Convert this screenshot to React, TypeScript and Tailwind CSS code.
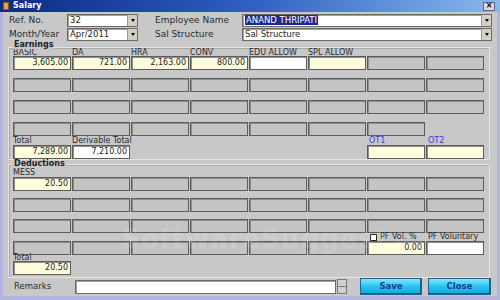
import React from "react";

type K = "y" | "w" | "g" | "n";
type C = { k: K; v?: string };

const F = { fontFamily: '"DejaVu Sans", Verdana, sans-serif' };

function Cell({ c }: { c: C }) {
  if (c.k === "n") return <div className="h-[14px]" />;
  const bg = c.k === "y" ? "bg-[#fdfdde]" : c.k === "w" ? "bg-white" : "bg-[#c4c4c4]";
  return (
    <div
      className={`h-[14px] ${bg} border border-[#5c5c5c] shadow-[inset_1px_1px_0_#8e8e8e] flex items-center justify-end pr-[2px] text-[8px] text-[#222] leading-none`}
    >
      {c.v}
    </div>
  );
}

function Row({ cells, className = "" }: { cells: C[]; className?: string }) {
  return (
    <div className={`grid grid-cols-[repeat(8,58px)] gap-x-px ${className}`}>
      {cells.map((c, i) => (
        <Cell key={i} c={c} />
      ))}
    </div>
  );
}

const g8: C[] = Array.from({ length: 8 }, () => ({ k: "g" as K }));

function Combo({ w, text, hl }: { w: string; text: string; hl?: boolean }) {
  return (
    <div className={`${w} h-[13px] bg-white border border-[#6a6a6a] shadow-[inset_1px_1px_0_#a0a0a0] flex items-center pl-[2px]`}>
      <div className="flex-1 text-[8.5px] leading-none text-[#222] whitespace-nowrap">
        {hl ? <span className="bg-[#1c2a8c] text-white px-px">{text}</span> : text}
      </div>
      <div className="w-[10px] h-[11px] bg-[#d4d0c8] border-l border-[#9a9a9a] flex items-center justify-center">
        <div className="w-0 h-0 border-l-[2.5px] border-r-[2.5px] border-t-[3px] border-l-transparent border-r-transparent border-t-black" />
      </div>
    </div>
  );
}

function LabelRow({ labels, className = "" }: { labels: React.ReactNode[]; className?: string }) {
  return (
    <div className={`grid grid-cols-[repeat(8,58px)] gap-x-px text-[8px] whitespace-nowrap ${className}`}>
      {labels.map((t, i) => (
        <div key={i}>{t}</div>
      ))}
    </div>
  );
}

export default function App() {
  return (
    <div className="w-[500px] h-[300px] bg-[#b4b4e0] flex flex-col overflow-hidden text-[#2a2a2a]" style={F}>
      {/* title bar */}
      <div className="h-[12px] shrink-0 bg-gradient-to-r from-[#0d2a86] via-[#2f5fc0] to-[#8ab8ee] flex items-center px-[3px]">
        <div className="w-[6px] h-[8px] bg-[#e9a23a] border border-[#8a5a10]" />
        <div className="ml-[4px] text-[8px] font-bold text-white leading-none">Salary</div>
        <div className="flex-1" />
        <div className="w-[12px] h-[9px] bg-[#d8d8e0] border border-[#606080] flex items-center justify-center text-[8px] font-bold leading-none text-black mr-[2px]">
          ×
        </div>
      </div>

      <div className="h-[284px] shrink-0 mx-[3px] bg-[#c8c8c8] relative flex flex-col">
        {/* header rows */}
        <div className="pt-[2px] pl-[6px] flex flex-col gap-px">
          <div className="flex items-center">
            <div className="w-[58px] text-[9px] leading-none">Ref. No.</div>
            <Combo w="w-[71px]" text="32" />
            <div className="ml-[17px] w-[87px] text-[9px] leading-none">Employee Name</div>
            <Combo w="w-[250px]" text="ANAND THRIPATI" hl />
          </div>
          <div className="flex items-center">
            <div className="w-[58px] text-[9px] leading-none">Month/Year</div>
            <Combo w="w-[71px]" text="Apr/2011" />
            <div className="ml-[17px] w-[87px] text-[9px] leading-none">Sal Structure</div>
            <Combo w="w-[250px]" text="Sal Structure" />
          </div>
        </div>

        {/* Earnings */}
        <div className="relative mt-[6px] ml-[5px] w-[482px] h-[113px] border border-[#e4e4e4] shadow-[inset_1px_1px_0_#a8a8a8] pl-[4px]">
          <div className="absolute -top-[7px] left-[4px] px-px h-[8px] bg-[#c8c8c8] text-[8px] font-bold leading-[8px] text-[#222]">
            Earnings
          </div>
          <LabelRow className="mt-[1px] h-[7px] leading-[8px]" labels={["BASIC", "DA", "HRA", "CONV", "EDU ALLOW", "SPL ALLOW", "", ""]} />
          <Row
            cells={[
              { k: "y", v: "3,605.00" },
              { k: "y", v: "721.00" },
              { k: "y", v: "2,163.00" },
              { k: "y", v: "800.00" },
              { k: "w" },
              { k: "y" },
              { k: "g" },
              { k: "g" },
            ]}
          />
          <Row className="mt-[8px]" cells={g8} />
          <Row className="mt-[8px]" cells={g8} />
          <Row className="mt-[8px]" cells={[...g8.slice(0, 7), { k: "n" }]} />
          <LabelRow
            className="h-[9px] leading-[10px]"
            labels={[
              "Total",
              "Derivable Total",
              "",
              "",
              "",
              "",
              <span className="text-[#3a3ad6] pl-[2px]">OT1</span>,
              <span className="text-[#3a3ad6] pl-[2px]">OT2</span>,
            ]}
          />
          <Row
            cells={[
              { k: "y", v: "7,289.00" },
              { k: "w", v: "7,210.00" },
              { k: "n" },
              { k: "n" },
              { k: "n" },
              { k: "n" },
              { k: "y" },
              { k: "y" },
            ]}
          />
        </div>

        {/* Deductions */}
        <div className="relative mt-[4px] ml-[5px] w-[482px] h-[114px] border border-[#e4e4e4] shadow-[inset_1px_1px_0_#a8a8a8] pl-[4px]">
          <div className="absolute -top-[5px] left-[4px] px-px h-[8px] bg-[#c8c8c8] text-[8px] font-bold leading-[8px] text-[#222]">
            Deductions
          </div>
          <div className="h-[12px] flex items-end text-[8px] leading-[8px]">MESS</div>
          <Row cells={[{ k: "y", v: "20.50" }, ...g8.slice(0, 7)]} />
          <Row className="mt-[7px]" cells={g8} />
          <Row className="mt-[7px]" cells={g8} />
          <LabelRow
            className="h-[8px] leading-[8px]"
            labels={[
              "",
              "",
              "",
              "",
              "",
              "",
              <div className="flex items-center pl-[3px] gap-[3px] h-[8px]">
                <div className="w-[7px] h-[7px] bg-white border border-[#222]" />
                <span>PF Vol. %</span>
              </div>,
              <span className="pl-[2px]">PF Voluntary</span>,
            ]}
          />
          <Row cells={[...g8.slice(0, 6), { k: "y", v: "0.00" }, { k: "w" }]} />
          <div className="h-[6px] text-[8px] leading-[6px]">Total</div>
          <Row cells={[{ k: "y", v: "20.50" }, { k: "n" }, { k: "n" }, { k: "n" }, { k: "n" }, { k: "n" }, { k: "n" }, { k: "n" }]} />
        </div>

        {/* Remarks row */}
        <div className="flex items-center h-[17px] pl-[11px]">
          <div className="w-[61px] text-[8.5px] leading-none">Remarks</div>
          <div className="w-[261px] h-[14px] bg-white border border-[#6a6a6a] shadow-[inset_1px_1px_0_#a0a0a0]" />
          <div className="w-[10px] h-[15px] flex flex-col border border-[#777] ml-px">
            <div className="flex-1 bg-[#d0d0d0] border-b border-[#777]" />
            <div className="flex-1 bg-[#d0d0d0]" />
          </div>
          <button className="ml-[13px] w-[62px] h-[17px] border border-[#24608c] bg-gradient-to-b from-[#7ce6ff] via-[#22c4f0] to-[#14a6dc] text-[8.5px] font-bold text-[#1b3c8e] leading-none shadow-[inset_-1px_-1px_0_#0f5f90]">
            Save
          </button>
          <button className="ml-[6px] w-[63px] h-[17px] border border-[#24608c] bg-gradient-to-b from-[#7ce6ff] via-[#22c4f0] to-[#14a6dc] text-[8.5px] font-bold text-[#1b3c8e] leading-none shadow-[inset_-1px_-1px_0_#0f5f90]">
            Close
          </button>
        </div>

        {/* watermark */}
        <div className="absolute left-[118px] top-[214px] text-[26px] font-bold text-white/10 leading-none pointer-events-none tracking-[1px] whitespace-nowrap">
          SoftwareSuggest<span className="text-[12px]">.com</span>
        </div>
      </div>
    </div>
  );
}
